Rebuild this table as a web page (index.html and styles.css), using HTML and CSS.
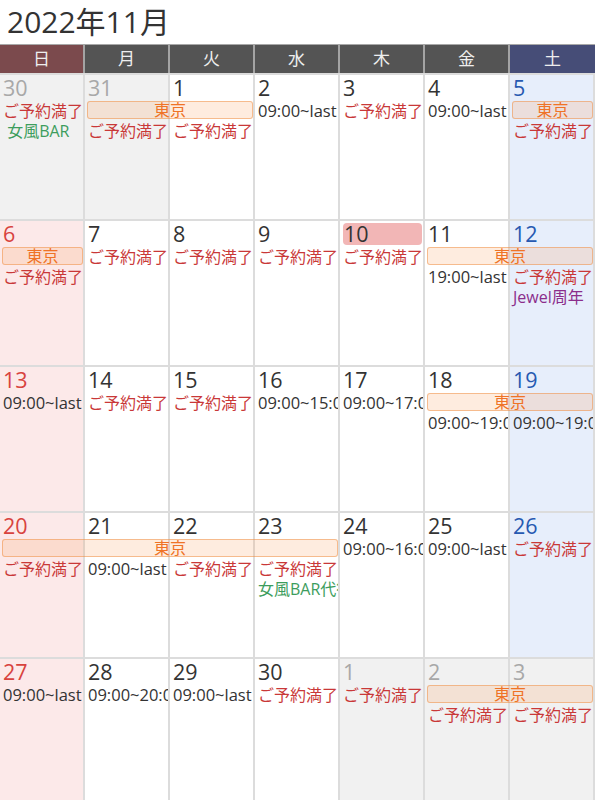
FILE: index.html
```html
<!DOCTYPE html>
<html lang="ja">
<head>
<meta charset="utf-8">
<title>2022年11月</title>
<link rel="stylesheet" href="styles.css">
</head>
<body>
<div class="title">2022年11月</div>
<div class="head">
  <div class="sun">日</div><div>月</div><div>火</div><div>水</div><div>木</div><div>金</div><div class="sat">土</div>
</div>

<div class="week">
  <div class="cell c1 sun other"><div class="num">30</div></div>
  <div class="cell c2 other"><div class="num">31</div></div>
  <div class="cell c3"><div class="num">1</div></div>
  <div class="cell c4"><div class="num">2</div></div>
  <div class="cell c5"><div class="num">3</div></div>
  <div class="cell c6"><div class="num">4</div></div>
  <div class="cell c7 sat"><div class="num">5</div></div>

  <div class="ev red c1 r2">ご予約満了</div>
  <div class="ev green c1 r3">&nbsp;女風BAR</div>
  <div class="bar c2 s2 r2">東京</div>
  <div class="ev red c2 r3">ご予約満了</div>
  <div class="ev red c3 r3">ご予約満了</div>
  <div class="ev time c4 r2">09:00~last</div>
  <div class="ev red c5 r2">ご予約満了</div>
  <div class="ev time c6 r2">09:00~last</div>
  <div class="bar c7 r2">東京</div>
  <div class="ev red c7 r3">ご予約満了</div>
</div>

<div class="week">
  <div class="cell c1 sun"><div class="num">6</div></div>
  <div class="cell c2"><div class="num">7</div></div>
  <div class="cell c3"><div class="num">8</div></div>
  <div class="cell c4"><div class="num">9</div></div>
  <div class="cell c5 today"><div class="num">10</div></div>
  <div class="cell c6"><div class="num">11</div></div>
  <div class="cell c7 sat"><div class="num">12</div></div>

  <div class="bar c1 r2">東京</div>
  <div class="ev red c1 r3">ご予約満了</div>
  <div class="ev red c2 r2">ご予約満了</div>
  <div class="ev red c3 r2">ご予約満了</div>
  <div class="ev red c4 r2">ご予約満了</div>
  <div class="ev red c5 r2">ご予約満了</div>
  <div class="bar c6 s2 r2">東京</div>
  <div class="ev time c6 r3">19:00~last</div>
  <div class="ev red c7 r3">ご予約満了</div>
  <div class="ev purple c7 r4">Jewel周年</div>
</div>

<div class="week">
  <div class="cell c1 sun"><div class="num">13</div></div>
  <div class="cell c2"><div class="num">14</div></div>
  <div class="cell c3"><div class="num">15</div></div>
  <div class="cell c4"><div class="num">16</div></div>
  <div class="cell c5"><div class="num">17</div></div>
  <div class="cell c6"><div class="num">18</div></div>
  <div class="cell c7 sat"><div class="num">19</div></div>

  <div class="ev time c1 r2">09:00~last</div>
  <div class="ev red c2 r2">ご予約満了</div>
  <div class="ev red c3 r2">ご予約満了</div>
  <div class="ev time c4 r2">09:00~15:00</div>
  <div class="ev time c5 r2">09:00~17:00</div>
  <div class="bar c6 s2 r2">東京</div>
  <div class="ev time c6 r3">09:00~19:00</div>
  <div class="ev time c7 r3">09:00~19:00</div>
</div>

<div class="week">
  <div class="cell c1 sun"><div class="num">20</div></div>
  <div class="cell c2"><div class="num">21</div></div>
  <div class="cell c3"><div class="num">22</div></div>
  <div class="cell c4"><div class="num">23</div></div>
  <div class="cell c5"><div class="num">24</div></div>
  <div class="cell c6"><div class="num">25</div></div>
  <div class="cell c7 sat"><div class="num">26</div></div>

  <div class="bar c1 s4 r2">東京</div>
  <div class="ev time c5 r2">09:00~16:00</div>
  <div class="ev time c6 r2">09:00~last</div>
  <div class="ev red c7 r2">ご予約満了</div>
  <div class="ev red c1 r3">ご予約満了</div>
  <div class="ev time c2 r3">09:00~last</div>
  <div class="ev red c3 r3">ご予約満了</div>
  <div class="ev red c4 r3">ご予約満了</div>
  <div class="ev green c4 r4">女風BAR代行</div>
</div>

<div class="week">
  <div class="cell c1 sun"><div class="num">27</div></div>
  <div class="cell c2"><div class="num">28</div></div>
  <div class="cell c3"><div class="num">29</div></div>
  <div class="cell c4"><div class="num">30</div></div>
  <div class="cell c5 other"><div class="num">1</div></div>
  <div class="cell c6 other"><div class="num">2</div></div>
  <div class="cell c7 sat other"><div class="num">3</div></div>

  <div class="ev time c1 r2">09:00~last</div>
  <div class="ev time c2 r2">09:00~20:00</div>
  <div class="ev time c3 r2">09:00~last</div>
  <div class="ev red c4 r2">ご予約満了</div>
  <div class="ev red c5 r2">ご予約満了</div>
  <div class="bar c6 s2 r2">東京</div>
  <div class="ev red c6 r3">ご予約満了</div>
  <div class="ev red c7 r3">ご予約満了</div>
</div>
</body>
</html>
```
FILE: styles.css
```css
* { box-sizing: border-box; }

html, body {
  margin: 0;
  padding: 0;
  background: #fff;
}

body {
  width: 595px;
  font-family: "Open Sans", "Noto Sans CJK JP", sans-serif;
  color: #333;
  overflow: hidden;
}

.title {
  height: 44px;
  padding-left: 7px;
  font-size: 30px;
  line-height: 44px;
  color: #333;
  white-space: nowrap;
}

.head {
  display: grid;
  grid-template-columns: repeat(7, 85px);
  height: 29px;
}

.head div {
  background: #545454;
  color: #eee;
  text-align: center;
  font-size: 17px;
  line-height: 28px;
  border-top: 1px solid #a8a8a8;
  border-right: 2px solid #a4a4a4;
}

.head .sun { background: #7b4a4d; }
.head .sat { background: #464d77; border-right: 0; }

.week {
  display: grid;
  grid-template-columns: repeat(7, 85px);
  grid-template-rows: 28px repeat(5, 20px) 1fr;
  height: 146px;
}

.cell {
  grid-row: 1 / -1;
  border-top: 2px solid #dcdcdc;
  border-right: 2px solid #dcdcdc;
  padding: 0 1px 0 3px;
  background: #fff;
}

.cell.sun { background: #fce9e9; }
.cell.sat { background: #e7eefb; }
.cell.other { background: #f1f1f1; }

.num {
  height: 22px;
  margin-top: 2px;
  padding-left: 0;
  font-size: 21.5px;
  line-height: 22px;
  color: #333;
}

.sun .num { color: #d8433e; }
.sat .num { color: #2659b1; }
.other .num { color: #a8a8a8; }

.today .num {
  background: #f2b6b6;
  border-radius: 4px;
  padding-left: 1px;
}

.c1 { grid-column-start: 1; }
.c2 { grid-column-start: 2; }
.c3 { grid-column-start: 3; }
.c4 { grid-column-start: 4; }
.c5 { grid-column-start: 5; }
.c6 { grid-column-start: 6; }
.c7 { grid-column-start: 7; }

.s2 { grid-column-end: span 2; }
.s4 { grid-column-end: span 4; }

.r2 { grid-row: 2; }
.r3 { grid-row: 3; }
.r4 { grid-row: 4; }

.ev {
  font-size: 16px;
  line-height: 20px;
  padding-left: 3px;
  margin-right: 2px;
  white-space: nowrap;
  overflow: hidden;
}

.red { color: #c93838; }
.green { color: #3d9d5d; }
.purple { color: #8b2d8b; }
.time { font-size: 16.5px; color: #333; }

.bar {
  align-self: start;
  height: 18px;
  margin: 0 2px;
  border: 1px solid rgba(240, 140, 60, 0.5);
  border-radius: 3px;
  background: rgba(250, 170, 110, 0.22);
  color: #ef7326;
  text-align: center;
  font-size: 16px;
  line-height: 16px;
  white-space: nowrap;
  overflow: hidden;
}
```
